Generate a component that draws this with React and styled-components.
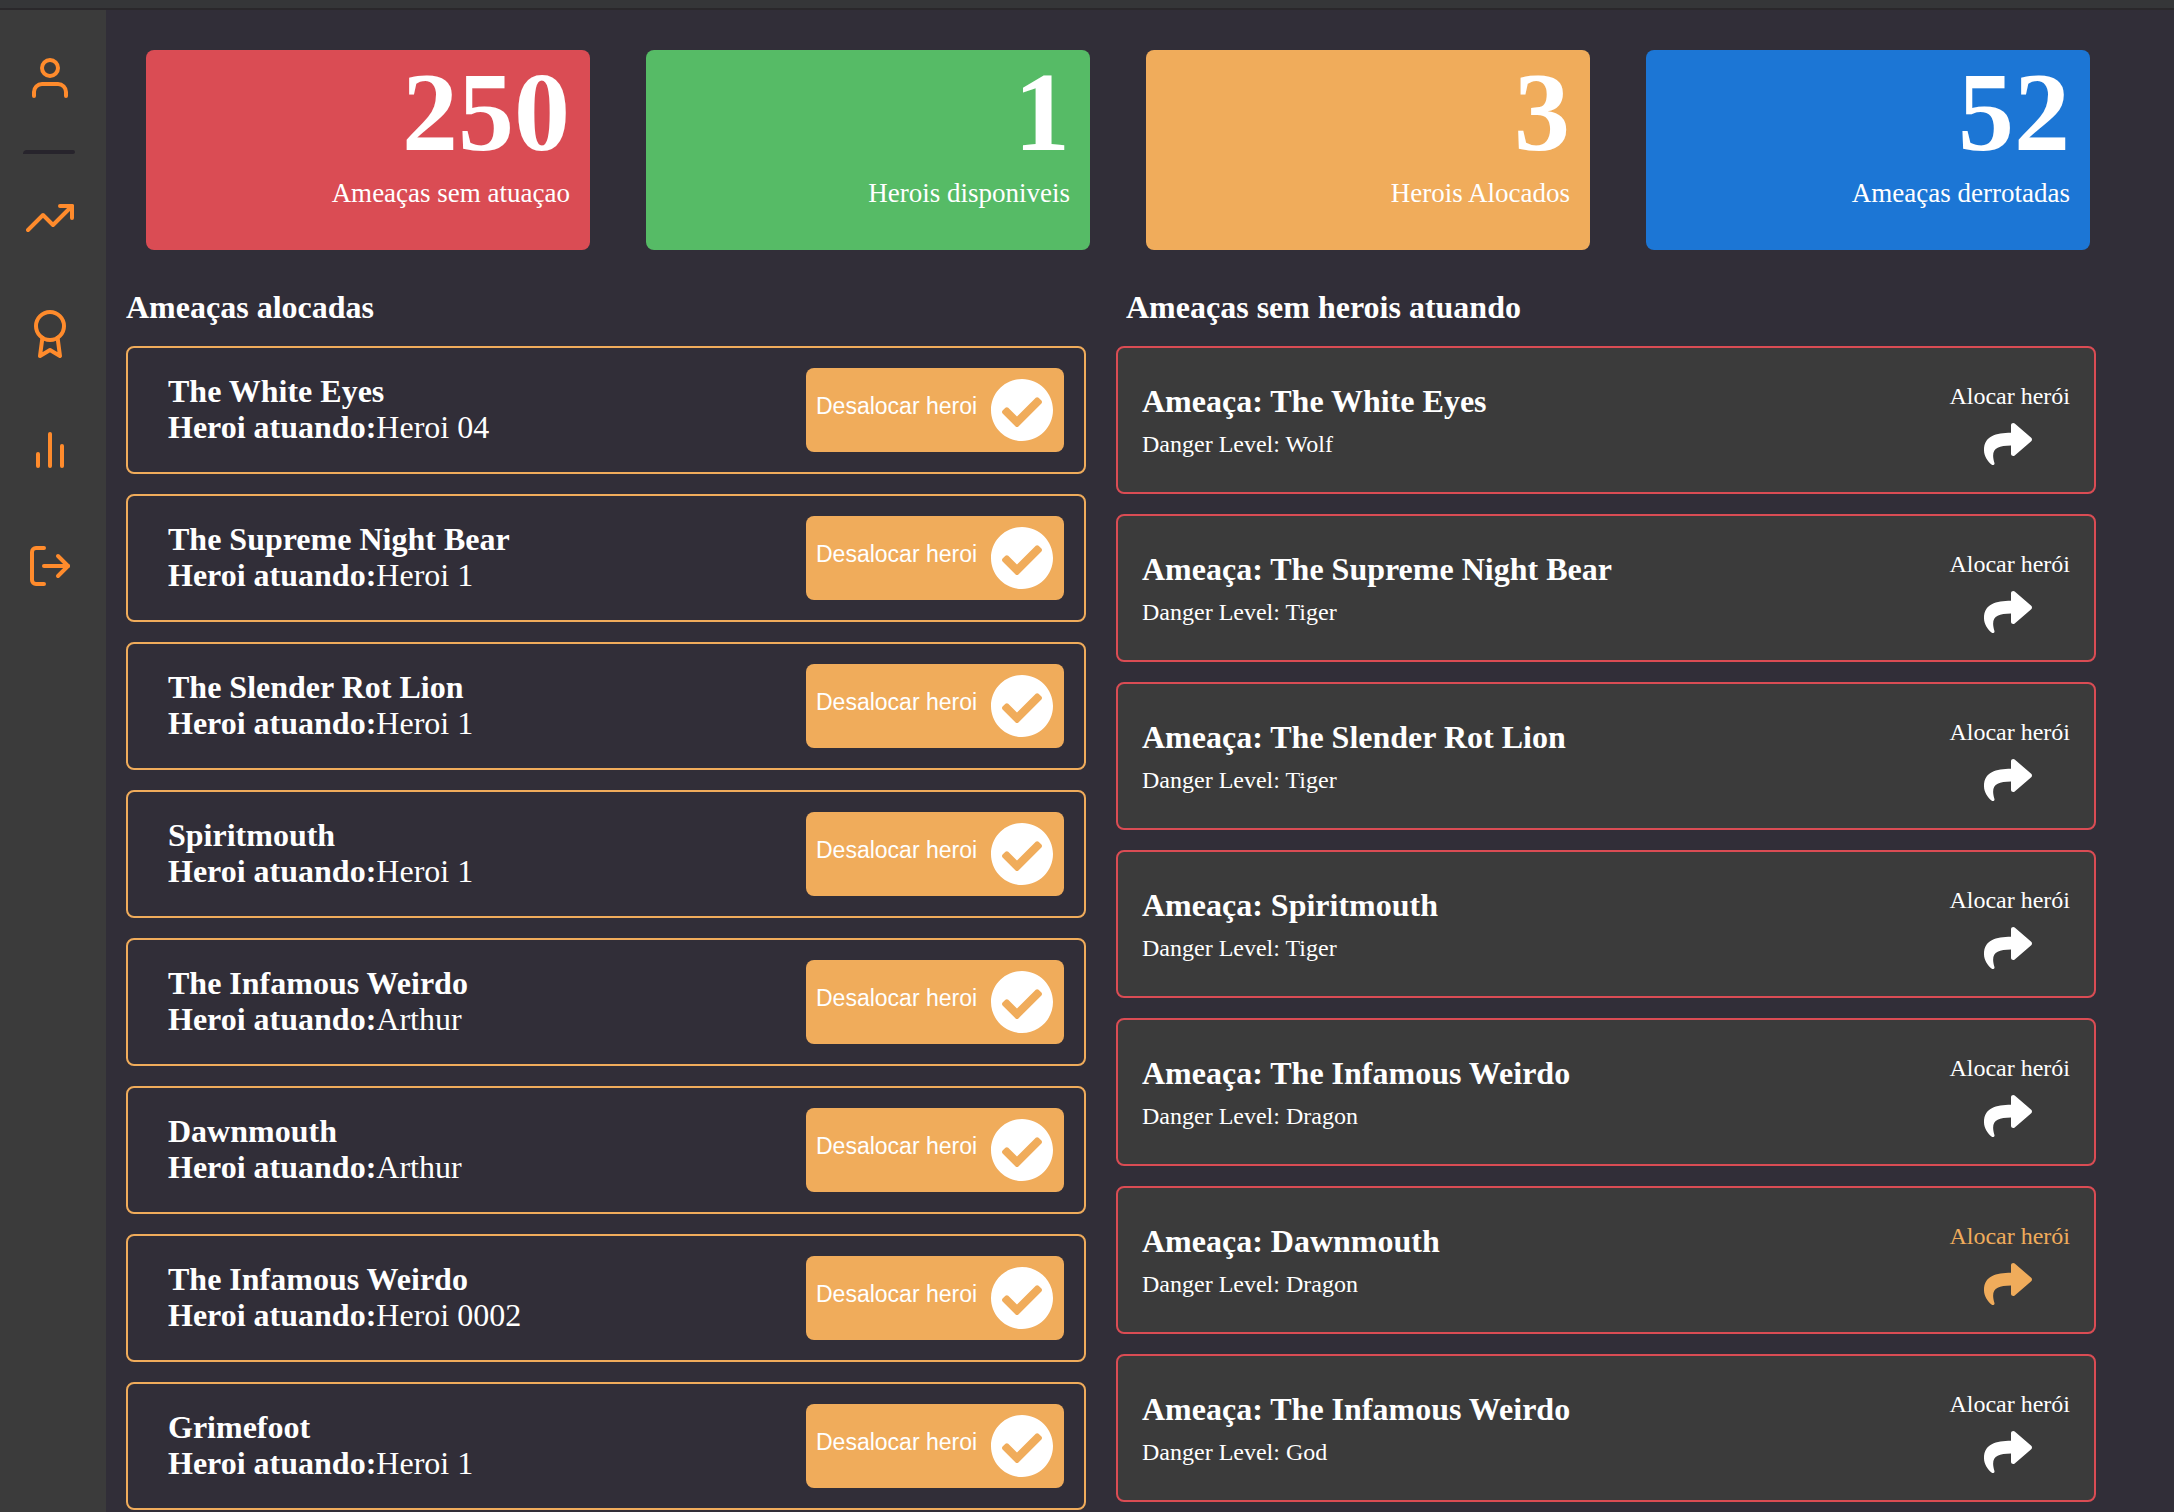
import React from "react";
import styled, { createGlobalStyle } from "styled-components";
import { FiUser, FiTrendingUp, FiAward, FiBarChart2, FiLogOut } from "react-icons/fi";
import { FaCheckCircle, FaShare } from "react-icons/fa";

const colors = {
  background: "#312e38",
  panel: "#3b3b3b",
  accent: "#ff8b2c",
  red: "#da4c54",
  green: "#56bb66",
  orange: "#f0ac5b",
  blue: "#1c76d5",
};

const serif = '"Liberation Serif", "Times New Roman", serif';
const sans = '"Liberation Sans", Arial, sans-serif';

const GlobalStyle = createGlobalStyle`
  * {
    box-sizing: border-box;
    margin: 0;
    padding: 0;
  }

  body {
    background: ${colors.background};
    color: #fff;
    font-family: ${serif};
    -webkit-font-smoothing: antialiased;
  }
`;

const Page = styled.div`
  display: flex;
  flex-direction: column;
  min-height: 100vh;
`;

const TopBar = styled.header`
  height: 10px;
  background: #353638;
  border-bottom: 2px solid #2a282b;
`;

const Body = styled.div`
  display: flex;
  flex: 1;
`;

const Sidebar = styled.aside`
  display: flex;
  flex-direction: column;
  align-items: center;
  width: 106px;
  padding: 44px 6px 0 0;
  background: ${colors.panel};
`;

const Divider = styled.hr`
  width: 52px;
  height: 4px;
  margin: 48px 2px 40px 0;
  border: 0;
  border-radius: 4px 2px 2px 0;
  background: #27242c;
`;

const Menu = styled.nav`
  display: flex;
  flex-direction: column;
  gap: 68px;
`;

const IconLink = styled.a`
  display: flex;
  color: ${colors.accent};
  font-size: 48px;
`;

const Main = styled.main`
  flex: 1;
  min-width: 0;
  padding: 40px 78px 0 20px;
`;

const Summary = styled.section`
  display: grid;
  grid-template-columns: repeat(4, 1fr);
  gap: 56px;
  padding: 0 6px 0 20px;
`;

const SummaryCard = styled.article`
  height: 200px;
  padding: 0 20px;
  border-radius: 8px;
  background: ${(props) => props.$color};
  text-align: right;
`;

const SummaryValue = styled.h1`
  font-size: 112px;
  line-height: 124px;
`;

const SummaryLabel = styled.p`
  font-size: 27px;
  line-height: 38px;
`;

const Columns = styled.div`
  display: grid;
  grid-template-columns: 48fr 49fr;
  gap: 30px;
  padding-top: 40px;
`;

const ColumnTitle = styled.h2`
  padding-left: ${(props) => (props.$inset ? "10px" : "0")};
  font-size: 32px;
  line-height: 34px;
`;

const List = styled.ul`
  display: flex;
  flex-direction: column;
  gap: 20px;
  padding-top: 22px;
  list-style: none;
`;

const AllocatedItem = styled.li`
  display: flex;
  align-items: center;
  justify-content: space-between;
  height: 128px;
  padding: 0 20px 0 40px;
  border: 2px solid ${colors.orange};
  border-radius: 8px;
`;

const AllocatedText = styled.p`
  padding-bottom: 2px;
  font-size: 32px;
  line-height: 36px;
`;

const ReleaseButton = styled.button`
  display: flex;
  align-items: center;
  justify-content: space-between;
  width: 258px;
  height: 84px;
  padding: 10px;
  border: 0;
  border-radius: 8px;
  background: ${colors.orange};
  color: #fff;
  font-family: ${sans};
  font-size: 64px;
  cursor: pointer;
`;

const ReleaseLabel = styled.span`
  padding-bottom: 8px;
  font-size: 23px;
  line-height: 28px;
  white-space: nowrap;
`;

const ThreatItem = styled.li`
  display: flex;
  align-items: center;
  justify-content: space-between;
  height: 148px;
  padding: 0 24px;
  border: 2px solid ${colors.red};
  border-radius: 8px;
  background: ${colors.panel};
`;

const ThreatInfo = styled.div`
  display: flex;
  flex-direction: column;
  gap: 10px;
`;

const ThreatName = styled.h3`
  font-size: 32px;
  line-height: 38px;
`;

const ThreatLevel = styled.p`
  font-size: 24px;
  line-height: 28px;
`;

const AllocateButton = styled.button`
  display: flex;
  flex-direction: column;
  align-items: center;
  gap: 10px;
  padding-top: 10px;
  border: 0;
  background: none;
  color: ${(props) => (props.$active ? colors.orange : "#fff")};
  font-family: ${serif};
  font-size: 48px;
  cursor: pointer;

  svg {
    margin-right: 4px;
  }
`;

const AllocateLabel = styled.span`
  font-size: 24px;
  line-height: 28px;
`;

const summary = [
  { value: 250, label: "Ameaças sem atuaçao", color: colors.red },
  { value: 1, label: "Herois disponiveis", color: colors.green },
  { value: 3, label: "Herois Alocados", color: colors.orange },
  { value: 52, label: "Ameaças derrotadas", color: colors.blue },
];

const menu = [
  { label: "Estatísticas", icon: FiTrendingUp },
  { label: "Conquistas", icon: FiAward },
  { label: "Ranking", icon: FiBarChart2 },
  { label: "Sair", icon: FiLogOut },
];

const allocated = [
  { name: "The White Eyes", hero: "Heroi 04" },
  { name: "The Supreme Night Bear", hero: "Heroi 1" },
  { name: "The Slender Rot Lion", hero: "Heroi 1" },
  { name: "Spiritmouth", hero: "Heroi 1" },
  { name: "The Infamous Weirdo", hero: "Arthur" },
  { name: "Dawnmouth", hero: "Arthur" },
  { name: "The Infamous Weirdo", hero: "Heroi 0002" },
  { name: "Grimefoot", hero: "Heroi 1" },
];

const threats = [
  { name: "The White Eyes", level: "Wolf" },
  { name: "The Supreme Night Bear", level: "Tiger" },
  { name: "The Slender Rot Lion", level: "Tiger" },
  { name: "Spiritmouth", level: "Tiger" },
  { name: "The Infamous Weirdo", level: "Dragon" },
  { name: "Dawnmouth", level: "Dragon", active: true },
  { name: "The Infamous Weirdo", level: "God" },
];

export default function App() {
  return (
    <Page>
      <GlobalStyle />
      <TopBar />
      <Body>
        <Sidebar>
          <IconLink href="#perfil" aria-label="Perfil">
            <FiUser />
          </IconLink>
          <Divider />
          <Menu>
            {menu.map(({ label, icon: Icon }) => (
              <IconLink key={label} href="#" aria-label={label}>
                <Icon />
              </IconLink>
            ))}
          </Menu>
        </Sidebar>
        <Main>
          <Summary>
            {summary.map((item) => (
              <SummaryCard key={item.label} $color={item.color}>
                <SummaryValue>{item.value}</SummaryValue>
                <SummaryLabel>{item.label}</SummaryLabel>
              </SummaryCard>
            ))}
          </Summary>
          <Columns>
            <section>
              <ColumnTitle>Ameaças alocadas</ColumnTitle>
              <List>
                {allocated.map((item, index) => (
                  <AllocatedItem key={index}>
                    <AllocatedText>
                      <strong>{item.name}</strong>
                      <br />
                      <strong>Heroi atuando:</strong>
                      {item.hero}
                    </AllocatedText>
                    <ReleaseButton type="button">
                      <ReleaseLabel>Desalocar heroi</ReleaseLabel>
                      <FaCheckCircle />
                    </ReleaseButton>
                  </AllocatedItem>
                ))}
              </List>
            </section>
            <section>
              <ColumnTitle $inset>Ameaças sem herois atuando</ColumnTitle>
              <List>
                {threats.map((item, index) => (
                  <ThreatItem key={index}>
                    <ThreatInfo>
                      <ThreatName>Ameaça: {item.name}</ThreatName>
                      <ThreatLevel>Danger Level: {item.level}</ThreatLevel>
                    </ThreatInfo>
                    <AllocateButton type="button" $active={item.active}>
                      <AllocateLabel>Alocar herói</AllocateLabel>
                      <FaShare />
                    </AllocateButton>
                  </ThreatItem>
                ))}
              </List>
            </section>
          </Columns>
        </Main>
      </Body>
    </Page>
  );
}
